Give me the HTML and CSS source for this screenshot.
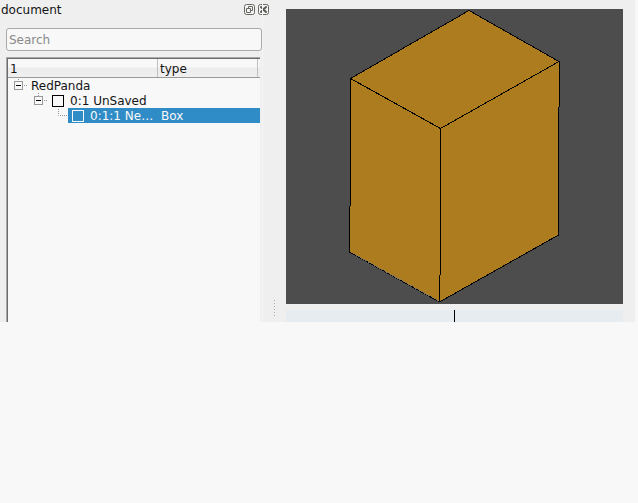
FILE: index.html
```
<!DOCTYPE html>
<html lang="en">
<head>
<meta charset="utf-8">
<title>document</title>
<link rel="stylesheet" href="styles.css">
</head>
<body>
<main class="window">
  <section class="dock">
    <header class="dock-title">
      <span>document</span>
      <div class="dock-buttons">
        <svg width="11" height="11" viewBox="0 0 11 11"><rect class="frame" x=".5" y=".5" width="10" height="10" rx="2"/><path class="glyph" d="M4.500 4.500V2.500H8.500V6.500H6.500M2.500 4.500H6.500V8.500H2.500Z"/></svg>
        <svg width="11" height="11" viewBox="0 0 11 11"><rect class="frame" x=".5" y=".5" width="10" height="10" rx="2"/><path class="cross" d="M3 3L8 8M8 3L3 8"/></svg>
      </div>
    </header>
    <div class="search">Search</div>
    <div class="tree">
      <div class="tree-head"><span class="col-name">1</span><span class="col-type">type</span></div>
      <div class="row">
        <svg class="branch root" width="16" height="15"><path class="dots" d="M7.500 1V3M13 7.500H16"/><rect class="toggle" x="3.500" y="3.500" width="8" height="8"/><path class="minus" d="M5 7.500H10"/></svg>
        <span class="name">RedPanda</span>
      </div>
      <div class="row">
        <svg class="branch child" width="16" height="15"><path class="dots" d="M7.500 0V3M13 7.500H16"/><rect class="toggle" x="3.500" y="3.500" width="8" height="8"/><path class="minus" d="M5 7.500H10"/></svg>
        <span class="check"></span><span class="name">0:1 UnSaved</span>
      </div>
      <div class="row">
        <svg class="branch leaf" width="14" height="15"><path class="dots" d="M4.500 1V7.500H14"/></svg>
        <div class="selected"><span class="check"></span><span class="name">0:1:1 Ne…</span><span class="value">Box</span></div>
      </div>
    </div>
  </section>
  <div class="splitter"><svg width="1" height="17"><path d="M.5 0V17"/></svg></div>
  <section class="view">
    <svg class="scene" width="337" height="295" viewBox="286 9 337 295" shape-rendering="crispEdges">
      <path class="solid" d="M469 10.500L559 61.500L558.500 235L440 302L349.500 252L350.500 78Z"/>
      <path class="edge" d="M350.500 78.500L469 10.500L559 61.500L440.500 128.500L350.500 78.500M350.500 78V206M349.500 206V252M559.500 61V107M558.500 107V235L439.500 302M440.500 128V275M439.500 275V302"/>
      <path class="edge" d="M349.500 252L439.500 302"/>
      <path class="soft-edge" d="M355 254.500L438 300.500"/>
    </svg>
    <div class="timeline"><span class="cursor"></span></div>
  </section>
</main>
</body>
</html>
```
FILE: styles.css
```
* { box-sizing: border-box; }
body {
  margin: 0;
  background: #f8f8f8;
  color: #141414;
  font: 12px/15px "DejaVu Sans", sans-serif;
}
svg { display: block; flex: none; fill: none; }
.window {
  display: flex;
  width: 635px;
  height: 322px;
  overflow: hidden;
  background: #efefef;
}
.dock { width: 262px; display: flex; flex-direction: column; }
.dock-title {
  display: flex;
  justify-content: space-between;
  height: 28px;
  padding: 3px 0 0 1px;
}
.dock-buttons { display: flex; gap: 3px; padding: 1px 0 0; margin-right: -7px; }
.frame { stroke: #686661; fill: #f4f4f4; }
.glyph { stroke: #686661; }
.cross { stroke: #5b5954; stroke-width: 2; stroke-linecap: round; }
.search {
  width: 256px;
  height: 23px;
  margin-left: 6px;
  padding: 4px 2px 2px;
  border: 1px solid #aaa;
  border-radius: 3px;
  background: #f8f8f8;
  color: #898989;
}
.tree {
  flex: 1;
  width: 254px;
  margin: 6px 0 0 6px;
  border-top: 1px solid #aaa;
  border-left: 1px solid #aaa;
  box-shadow: inset 1px 1px #6b6b6b;
  padding: 1px 0 0 1px;
  background: #f8f8f8;
}
.tree-head {
  display: flex;
  height: 19px;
  border-bottom: 1px solid #999;
  background: linear-gradient(#f8f8f8 0 45%, #ececec 50%, #f0f0f0);
}
.col-name { width: 150px; padding: 3px 2px 0; border-right: 1px solid #c0c0c0; }
.col-type { width: 100px; padding: 3px 2px 0; border-right: 1px solid #c0c0c0; }
.row { display: flex; height: 15px; white-space: nowrap; }
.name, .value { padding-top: 1px; }
.branch { margin-left: 3px; }
.branch.child { margin-left: 23px; }
.branch.leaf { margin: 0 0 0 46px; }
.root + .name { margin-left: 4px; }
.dots { stroke: #999; stroke-dasharray: 1 1; }
.toggle { stroke: #999; }
.minus { stroke: #000; }
.check { width: 12px; height: 12px; border: 1px solid #000; }
.child + .check { margin: 2px 6px 0 5px; }
.selected { display: flex; width: 192px; background: #308cc6; color: #f8f8f8; }
.selected .check { margin: 2px 6px 0 4px; border-color: #f8f8f8; }
.selected .name { width: 71px; }
.splitter { width: 24px; padding: 300px 0 0 11px; border-left: 1px solid #f4f4f4; }
.splitter path { stroke: #aaa; stroke-dasharray: 1 2; }
.view { width: 337px; padding-top: 9px; }
.scene { background: #4d4d4d; }
.solid { fill: #ad7c1f; }
.edge { stroke: #000; }
.soft-edge { stroke: #807560; stroke-dasharray: 2 1; }
.timeline { height: 12px; margin-top: 6px; padding-left: 168px; background: #e6ecef; }
.cursor { display: block; width: 1px; height: 12px; background: #000; }
```
